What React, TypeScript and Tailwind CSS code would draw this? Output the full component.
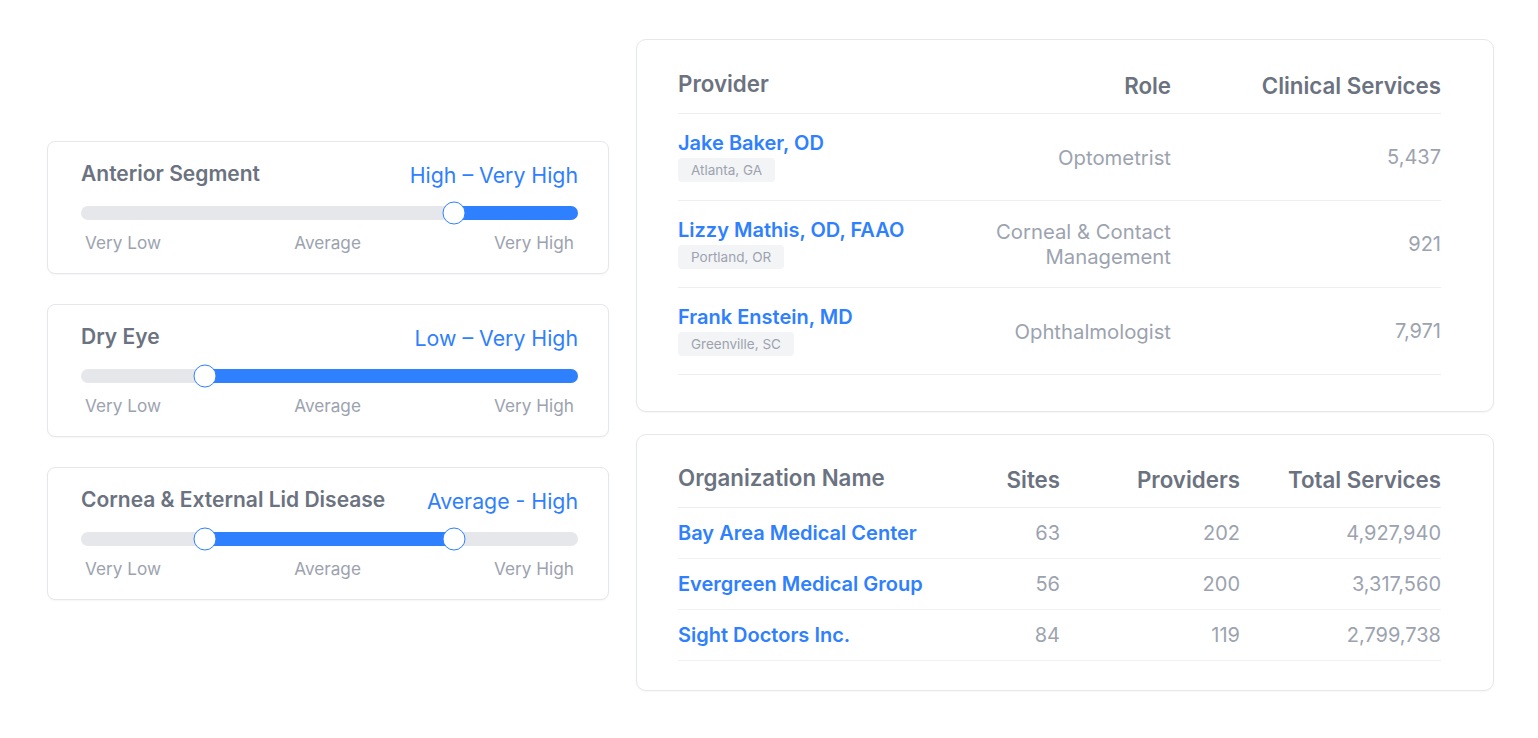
import React from "react";

const BLUE = "text-[#2f80ff]";

type SliderProps = { title: string; value: string; from: number; to: number };

function SliderCard({ title, value, from, to }: SliderProps) {
  return (
    <div className="bg-white border border-[#e5e7eb] rounded-[8px] shadow-[0_1px_2px_rgba(0,0,0,0.04)] pl-[33px] pr-[30px] pt-[17px] pb-[18px]">
      <div className="flex items-end justify-between h-[28px]">
        <span className="text-[21px] leading-[28px] font-semibold text-[#6b7280] translate-y-[1px]">{title}</span>
        <span className={`text-[21.3px] leading-[28px] ${BLUE} translate-y-[2px]`}>{value}</span>
      </div>
      <div className="mt-[19px] relative h-[14px] rounded-full bg-[#e5e7eb]">
        <div
          className="absolute top-0 bottom-0 bg-[#2f80ff] rounded-full"
          style={{ left: `${from}%`, right: `${100 - to}%` }}
        />
        {from > 0 && (
          <div
            className="absolute top-1/2 w-[23px] h-[23px] -translate-x-1/2 -translate-y-1/2 rounded-full bg-white border-[1.5px] border-[#2f80ff]"
            style={{ left: `${from}%` }}
          />
        )}
        {to < 100 && (
          <div
            className="absolute top-1/2 w-[23px] h-[23px] -translate-x-1/2 -translate-y-1/2 rounded-full bg-white border-[1.5px] border-[#2f80ff]"
            style={{ left: `${to}%` }}
          />
        )}
      </div>
      <div className="mt-[11px] flex justify-between pl-[4px] pr-[4px] text-[17.2px] leading-[24px] text-[#9ca3af]">
        <span>Very Low</span>
        <span>Average</span>
        <span>Very High</span>
      </div>
    </div>
  );
}

const providers = [
  { name: "Jake Baker, OD", city: "Atlanta, GA", role: "Optometrist", services: "5,437" },
  { name: "Lizzy Mathis, OD, FAAO", city: "Portland, OR", role: "Corneal & Contact Management", services: "921" },
  { name: "Frank Enstein, MD", city: "Greenville, SC", role: "Ophthalmologist", services: "7,971" },
];

const orgs = [
  { name: "Bay Area Medical Center", sites: "63", providers: "202", total: "4,927,940" },
  { name: "Evergreen Medical Group", sites: "56", providers: "200", total: "3,317,560" },
  { name: "Sight Doctors Inc.", sites: "84", providers: "119", total: "2,799,738" },
];

function ProviderTable() {
  return (
    <div className="bg-white border border-[#e5e7eb] rounded-[10px] shadow-[0_1px_2px_rgba(0,0,0,0.04)] pl-[41px] pr-[52px] pt-[31px] pb-[36px]">
      <div className="flex items-end border-b border-[#eceef1] pb-[14px] text-[22.3px] leading-[28px] font-semibold text-[#6b7280]">
        <div className="flex-1 -translate-y-[1px]">Provider</div>
        <div className="w-[200px] text-right translate-y-[1px]">Role</div>
        <div className="w-[270px] text-right translate-y-[1px]">Clinical Services</div>
      </div>
      {providers.map((p) => (
        <div key={p.name} className="flex items-center h-[87px] border-b border-[#eceef1]">
          <div className="flex-1 flex flex-col items-start -translate-y-[1px]">
            <span className={`text-[20px] leading-[26px] font-semibold ${BLUE}`}>{p.name}</span>
            <span className="mt-[2px] bg-[#f3f4f6] rounded-[4px] px-[13px] h-[24px] flex items-center text-[13.5px] text-[#9ca3af]">
              {p.city}
            </span>
          </div>
          <div className="w-[200px] text-right text-[20.3px] leading-[25px] text-[#9ca3af]">{p.role}</div>
          <div className="w-[270px] text-right text-[20px] leading-[25px] text-[#9ca3af]">{p.services}</div>
        </div>
      ))}
    </div>
  );
}

function OrgTable() {
  return (
    <div className="bg-white border border-[#e5e7eb] rounded-[10px] shadow-[0_1px_2px_rgba(0,0,0,0.04)] pl-[41px] pr-[52px] pt-[30px] pb-[29px]">
      <div className="flex items-end border-b border-[#eceef1] pb-[14px] text-[22.3px] leading-[28px] font-semibold text-[#6b7280]">
        <div className="flex-1 -translate-y-[1px]">Organization Name</div>
        <div className="w-[120px] text-right translate-y-[1px]">Sites</div>
        <div className="w-[180px] text-right translate-y-[1px]">Providers</div>
        <div className="w-[201px] text-right translate-y-[1px]">Total Services</div>
      </div>
      {orgs.map((o) => (
        <div key={o.name} className="flex items-center h-[51px] border-b border-[#f0f1f3] text-[20px] leading-[26px]">
          <div className={`flex-1 font-semibold ${BLUE}`}>{o.name}</div>
          <div className="w-[120px] text-right text-[#9ca3af]">{o.sites}</div>
          <div className="w-[180px] text-right text-[#9ca3af]">{o.providers}</div>
          <div className="w-[201px] text-right text-[#9ca3af]">{o.total}</div>
        </div>
      ))}
    </div>
  );
}

export default function App() {
  return (
    <div
      className="w-[1538px] h-[738px] bg-white flex items-start gap-[27px] pl-[47px] pt-[39px]"
      style={{ fontFamily: "Inter, 'Noto Sans', sans-serif" }}
    >
      <div className="w-[562px] mt-[102px] flex flex-col gap-[30px]">
        <SliderCard title="Anterior Segment" value="High – Very High" from={75} to={100} />
        <SliderCard title="Dry Eye" value="Low – Very High" from={25} to={100} />
        <SliderCard title="Cornea & External Lid Disease" value="Average - High" from={25} to={75} />
      </div>
      <div className="w-[858px] flex flex-col gap-[22px]">
        <ProviderTable />
        <OrgTable />
      </div>
    </div>
  );
}
